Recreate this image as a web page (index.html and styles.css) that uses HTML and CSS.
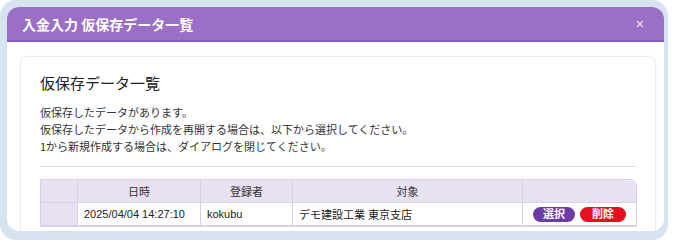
FILE: index.html
```html
<!DOCTYPE html>
<html lang="ja">
<head>
<meta charset="utf-8">
<title>入金入力 仮保存データ一覧</title>
<link rel="stylesheet" href="styles.css">
</head>
<body>
<div class="frame">
  <div class="dialog">
    <div class="dialog-header">
      <span class="dialog-title">入金入力 仮保存データ一覧</span>
      <span class="close">×</span>
    </div>
    <div class="dialog-body">
      <div class="card">
        <h2 class="card-title">仮保存データ一覧</h2>
        <p class="message">仮保存したデータがあります。<br>仮保存したデータから作成を再開する場合は、以下から選択してください。<br>1から新規作成する場合は、ダイアログを閉じてください。</p>
        <hr class="divider">
        <table class="list">
          <thead>
            <tr>
              <th class="c-blank"></th>
              <th class="c-date">日時</th>
              <th class="c-user">登録者</th>
              <th class="c-target">対象</th>
              <th class="c-action"></th>
            </tr>
          </thead>
          <tbody>
            <tr>
              <td class="c-blank"></td>
              <td>2025/04/04 14:27:10</td>
              <td>kokubu</td>
              <td>デモ建設工業 東京支店</td>
              <td class="actions"><span class="pill pill-select">選択</span><span class="pill pill-delete">削除</span></td>
            </tr>
          </tbody>
        </table>
      </div>
    </div>
  </div>
</div>
</body>
</html>
```

FILE: styles.css
```css
* { box-sizing: border-box; }
html, body { margin: 0; padding: 0; background: #ffffff; }
body {
  font-family: "Liberation Sans", "Noto Sans CJK JP", sans-serif;
  color: #333333;
}
.frame {
  width: 668px;
  height: 240px;
  background: #d6e3f1;
  border-radius: 16px;
  padding: 7px 4px 9px 7px;
}
.dialog {
  height: 100%;
  background: #ffffff;
  border-radius: 12px;
  overflow: hidden;
  display: flex;
  flex-direction: column;
}
.dialog-header {
  flex: none;
  height: 35px;
  background: #9c6fc7;
  border-bottom: 2px solid #8a5cb5;
  display: flex;
  align-items: center;
  justify-content: space-between;
  padding: 0 20px 0 15px;
}
.dialog-title {
  color: #ffffff;
  font-weight: bold;
  font-size: 14px;
  font-family: "Noto Sans CJK JP", sans-serif;
}
.close {
  color: #f3ecfa;
  font-size: 14px;
  line-height: 1;
}
.dialog-body {
  flex: 1;
  min-height: 0;
  overflow: hidden;
  padding: 14px 8px 0 13px;
}
.card {
  border: 1px solid #ececec;
  border-radius: 8px;
  box-shadow: 0 0 3px rgba(0,0,0,0.05);
  padding: 14px 19px 20px 19px;
}
.card-title {
  margin: 0;
  font-family: "Noto Sans CJK JP", sans-serif;
  font-size: 15px;
  font-weight: normal;
  line-height: 24px;
  color: #222;
}
.message {
  margin: 9px 0 0 0;
  font-family: "Noto Sans CJK JP", sans-serif;
  font-size: 11px;
  line-height: 17px;
  color: #333;
}
.divider {
  border: 0;
  border-top: 1px solid #dedede;
  margin: 11px 0 12px 0;
}
.list {
  width: 597px;
  table-layout: fixed;
  border-collapse: separate;
  border-spacing: 0;
  border: 1px solid #d9d1e3;
  border-radius: 0 6px 0 0;
  font-size: 11px;
}
.list th, .list td {
  height: 23px;
  padding: 0 6px;
  border-right: 1px solid #d9d1e3;
  border-bottom: 1px solid #d9d1e3;
  white-space: nowrap;
}
.list th:last-child, .list td:last-child { border-right: 0; }
.list th {
  background: #e8e1f2;
  font-weight: normal;
  text-align: center;
  color: #333;
}
.list th:last-child { border-top-right-radius: 6px; }
.list td { background: #ffffff; color: #222; }
.list td.c-blank { background: #e8e1f2; }
.c-blank { width: 37px; }
.c-date { width: 123px; }
.c-user { width: 92px; }
.c-target { width: 230px; }
.list td.actions { text-align: center; padding: 0; }
.pill {
  display: inline-block;
  width: 42px;
  height: 15px;
  line-height: 15px;
  border-radius: 8px;
  color: #fff;
  font-weight: bold;
  font-size: 11px;
  text-align: center;
  vertical-align: middle;
}
.pill-select { background: #6d3aa8; margin-right: 5px; }
.pill-delete { background: #e8101c; width: 46px; }
```
